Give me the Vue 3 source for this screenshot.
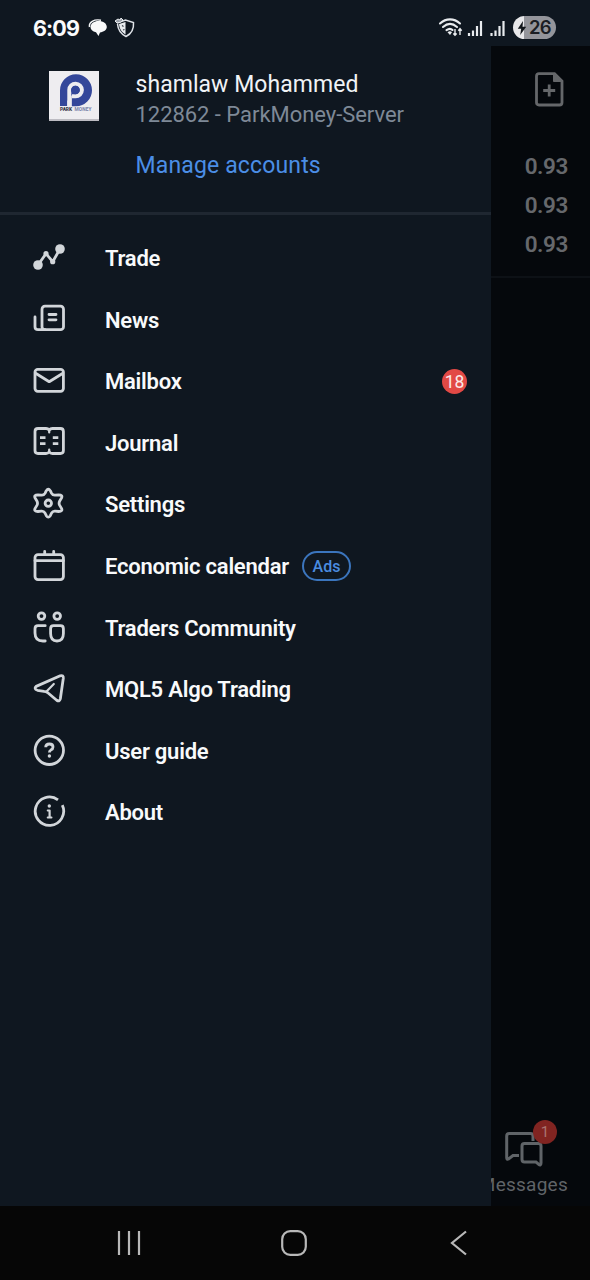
<script setup>
const items = [
  { id: 'trade', label: 'Trade' },
  { id: 'news', label: 'News' },
  { id: 'mail', label: 'Mailbox', count: 18 },
  { id: 'journal', label: 'Journal' },
  { id: 'settings', label: 'Settings' },
  { id: 'calendar', label: 'Economic calendar', tag: 'Ads' },
  { id: 'community', label: 'Traders Community' },
  { id: 'algo', label: 'MQL5 Algo Trading' },
  { id: 'guide', label: 'User guide' },
  { id: 'about', label: 'About' }
]
const values = ['0.93', '0.93', '0.93']
</script>

<template>
  <div class="screen">
    <header class="status">
      <span class="clock">6:09</span>
      <svg class="chat" width="20" height="20" viewBox="0 0 20 20">
        <path d="M1.500 9C0.500 4 6 1 13 2.200" fill="none" stroke="#f4f6f8" stroke-width="1.400" />
        <path d="M10.500 3C15.500 3 18.800 5.600 18.800 9C18.800 12 15.500 14 12 14.400L10.500 18L8 14.200C4.500 13.500 2.500 11.500 2.500 9C2.500 5.600 6 3 10.500 3Z" fill="#f8f9fa" />
      </svg>
      <svg class="shield" width="22" height="22" viewBox="0 0 22 22">
        <path d="M3 6L11.500 3L19.500 5.500C20 12 17 17 12 19.500C7 17 4 13 3.500 7" fill="none" stroke="#dfe3e8" stroke-width="1.500" />
        <path d="M5 7L11.500 5V17.500C7.500 15 5.500 12 5 7Z" fill="#e9ecef" />
        <path d="M1 4L4 2L6 3L7 1L9 3L7 5L3 6Z" fill="#9aa1aa" stroke="#e9ecef" stroke-width="1" />
        <path d="M8 8.500L9.500 9.500M9 13L10.500 12.500" stroke="#333b44" stroke-width="1.100" />
      </svg>
      <div class="spacer"></div>
      <svg class="signals" width="72" height="22" viewBox="0 0 72 22">
        <g fill="none" stroke="#e8ebee" stroke-width="2.100" stroke-linecap="round">
          <path d="M2 6.500C8 1 16 1 22 6.500" />
          <path d="M5 10C9.500 6 14.500 6 19 10" />
          <path d="M8.500 13.200C10.800 11.500 13 11.500 14.500 13" />
        </g>
        <path d="M12 18L9.500 15.200Q12 13.400 14 15.200Z" fill="#e8ebee" />
        <path d="M17 12V18M15.300 16.500L17 18.300L18.700 16.500M22 18V12M20.300 13.700L22 11.700L23.700 13.700" fill="none" stroke="#e8ebee" stroke-width="1.400" />
        <path d="M31 16V19M35 13.500V19M39 9V19M43 4V19M53.500 16V19M57.500 13.500V19M61.500 9V19M65.500 4V19" stroke="#e8ebee" stroke-width="2.200" />
      </svg>
      <div class="battery">
        <svg width="10" height="14" viewBox="0 0 10 14"><path d="M6 0L0.800 7.800H4.200L3.200 14L9.200 5.800H5.500Z" fill="#12161b" /></svg>
        <span>26</span>
      </div>
    </header>

    <main class="body">
      <aside class="drawer">
        <section class="account">
          <svg class="logo" width="50" height="50" viewBox="0 0 50 50">
            <rect width="50" height="50" fill="#eeedf0" />
            <rect y="48" width="50" height="2" fill="#bdbcc2" />
            <path d="M11 35V19.300A16 16 0 1 1 27 35.300H23V35Z" fill="#34479a" />
            <path d="M20.300 35.500V19A6.300 6.300 0 1 1 26.500 25.300H23" fill="none" stroke="#eeedf0" stroke-width="4" />
            <path d="M18.300 30V36H22.800V24Z" fill="#eeedf0" />
            <circle cx="26.300" cy="19" r="4.300" fill="#34479a" />
            <text x="11" y="40.400" textLength="12" font-size="4.800" class="logo-a">PARK</text>
            <text x="25.500" y="40.400" textLength="17" font-size="4.800" class="logo-b">MONEY</text>
          </svg>
          <div class="who">
            <div class="name">shamlaw Mohammed</div>
            <div class="server">122862 - ParkMoney-Server</div>
            <div class="manage">Manage accounts</div>
          </div>
        </section>

        <nav class="menu">
          <div v-for="item in items" :key="item.id" class="row">
            <svg class="icon" width="36" height="36" viewBox="0 0 36 36">
              <template v-if="item.id === 'trade'">
                <path d="M7 26L15 14.700L21.700 22.700L29 10" />
                <circle class="solid" cx="7" cy="26" r="4.800" />
                <circle class="solid" cx="29" cy="10" r="4.800" />
                <circle class="solid" cx="15" cy="14.700" r="2.600" />
                <circle class="solid" cx="21.700" cy="22.700" r="2.600" />
              </template>
              <template v-else-if="item.id === 'news'">
                <rect x="11" y="5.200" width="21.500" height="23.500" rx="3" />
                <path d="M4 16V25.700Q4 28.700 7 28.700H14M18 13.500H25M18 18.800H25" />
              </template>
              <template v-else-if="item.id === 'mail'">
                <rect x="4" y="7.300" width="28.400" height="22" rx="2.800" />
                <path d="M5 11.500L18.200 19.700L31.500 11.500" />
              </template>
              <template v-else-if="item.id === 'journal'">
                <path d="M18.200 6.300Q17 4.500 15 4.500H7Q4 4.500 4 7.500V26.500Q4 29.500 7 29.500H15Q17 29.500 18.200 27.700Q19.400 29.500 21.400 29.500H29.400Q32.400 29.500 32.400 26.500V7.500Q32.400 4.500 29.400 4.500H21.400Q19.400 4.500 18.200 6.300Z" />
                <path class="butt" d="M9 13.700H14.500M9 19.700H14.500M21.800 13.700H27.300M21.800 19.700H27.300" />
                <path class="thin" d="M18.200 7V8.500M18.200 25.500V27" />
              </template>
              <template v-else-if="item.id === 'settings'">
                <path d="M15.300 5.700Q17.300 2.800 19.300 5.700L20.600 8.400Q21.800 10.400 24.200 10.200L27.700 9.900Q32 10 30.500 13L28.700 16Q27.500 18.200 28.700 20.400L30.500 23.400Q32 26.400 27.700 26.500L24.200 26.200Q21.800 26 20.600 28L19.300 30.700Q17.300 33.600 15.300 30.700L14 28Q12.800 26 10.400 26.200L6.900 26.500Q2.600 26.400 4.100 23.400L5.900 20.400Q7.100 18.200 5.900 16L4.100 13Q2.600 10 6.900 9.900L10.400 10.200Q12.800 10.400 14 8.400Z" />
                <circle cx="17.300" cy="18.200" r="3.200" />
              </template>
              <template v-else-if="item.id === 'calendar'">
                <rect x="4" y="7.600" width="28.400" height="25" rx="3" />
                <path d="M4 13.700H32.400M13.700 4.500V7M22.700 4.500V7" />
              </template>
              <template v-else-if="item.id === 'community'">
                <circle cx="10.500" cy="7.100" r="3.300" />
                <circle cx="26.200" cy="7.100" r="3.300" />
                <path d="M14.200 16.700H7Q4 16.700 4 19.700V24Q4 32 12 32H14.200" />
                <path d="M22.500 16.700H29.500Q32.400 16.700 32.400 19.700V24.500Q32.400 32 26 32Q19.600 32 19.600 24.500V19.700Q19.600 16.700 22.500 16.700Z" />
              </template>
              <template v-else-if="item.id === 'algo'">
                <path d="M5.200 16.400L29.200 5.800Q32.600 4.800 32.300 8.200L29.300 29Q28.500 32 25.700 30.200L16.500 22.500Q15 21.600 13 21.400L6.500 20.300Q2.500 18.800 5.200 16.400Z" />
                <path class="thin" d="M15.500 21.500L22.800 14" />
              </template>
              <template v-else-if="item.id === 'guide'">
                <circle cx="18.300" cy="18.300" r="14.200" />
                <path d="M14.700 15.300Q14.700 12 18.400 12Q22 12 22 15Q22 17 19.800 18.100Q18.400 18.900 18.400 20.500" class="butt" />
                <circle class="solid" cx="18.400" cy="24" r="1.700" />
              </template>
              <template v-else>
                <path d="M27 6.900A14.200 14.200 0 1 0 31.300 12.200" class="butt" />
                <circle class="solid" cx="18.300" cy="13" r="1.700" />
                <path d="M16.800 17.500H18.600V24M16.800 24.500H20.400" class="thin" />
              </template>
            </svg>
            <span class="label">{{ item.label }}</span>
            <span v-if="item.tag" class="tag">{{ item.tag }}</span>
            <span v-if="item.count" class="count">{{ item.count }}</span>
          </div>
        </nav>
      </aside>

      <section class="behind">
        <svg class="doc" width="30" height="36" viewBox="0 0 30 36">
          <path d="M4 1.700H19.500L27 9.200V30.500Q27 33 24.500 33H4Q1.500 33 1.500 30.500V4.200Q1.500 1.700 4 1.700Z" />
          <path d="M18.500 2V9.500H27Z" class="fold" />
          <path d="M14.200 12.500V24.500M8.200 18.500H20.200" />
        </svg>
        <div class="values">
          <div v-for="(v, i) in values" :key="i">{{ v }}</div>
        </div>
        <div class="spacer"></div>
        <div class="tab">
          <div class="tab-icon">
            <svg width="40" height="38" viewBox="0 0 40 38">
              <path d="M14 26.500H8L3.500 30Q1.700 31 1.700 28.500V7Q1.700 4.500 4.200 4.500H25.500Q28 4.500 28 7V12" />
              <path d="M19.500 14.500H33.500Q36 14.500 36 17V34Q36 37 33.500 35.200L31 33H19.500Q17 33 17 30.500V17Q17 14.500 19.500 14.500Z" />
            </svg>
            <span class="dot">1</span>
          </div>
          <div class="tab-label"><span>Messages</span></div>
        </div>
      </section>
    </main>

    <footer class="navbar">
      <svg width="26" height="26" viewBox="0 0 26 26"><path d="M3 1V25M13 1V25M23 1V25" /></svg>
      <svg width="26" height="26" viewBox="0 0 26 26"><rect x="1.200" y="1.200" width="23.600" height="23.600" rx="8" /></svg>
      <svg width="26" height="26" viewBox="0 0 26 26"><path d="M20 1.500L6 13L20 24.500" /></svg>
    </footer>
  </div>
</template>

<style>
body { background: #060606; }
</style>

<style scoped>
.screen {
  width: 590px;
  height: 1280px;
  display: flex;
  flex-direction: column;
  overflow: hidden;
  background: #0f1720;
  font-family: Roboto, "Liberation Sans", sans-serif;
}
.spacer { flex: 1; }
.status {
  height: 46px;
  flex: none;
  display: flex;
  align-items: center;
  padding: 9px 34px 0 33px;
  box-sizing: border-box;
}
.clock {
  width: 46px;
  font: 700 21.5px/24px Inter, sans-serif;
  letter-spacing: -0.9px;
  color: #fafbfc;
  white-space: nowrap;
}
.chat { margin-left: 9px; }
.shield { margin-left: 6px; }
.signals { margin-right: 3px; }
.battery {
  width: 43px;
  height: 23px;
  border-radius: 12px;
  background: linear-gradient(90deg, #e8e8ea 0 11px, #94959b 11px);
  display: flex;
  align-items: center;
  padding-left: 4px;
  box-sizing: border-box;
  gap: 2px;
  font: 600 18.5px/23px Inter, sans-serif;
  letter-spacing: -0.900px;
  color: #1b1e24;
}
.body { flex: 1; min-height: 0; display: flex; }
.drawer { width: 491px; flex: none; background: #0f1720; }
.account {
  height: 169px;
  box-sizing: border-box;
  border-bottom: 3px solid #1f2731;
  display: flex;
  padding: 25px 0 0 49px;
}
.logo { margin-top: -0.500px; }
.who { margin-left: 36.500px; white-space: nowrap; }
.logo-a { font-weight: 900; fill: #3c3c4a; }
.logo-b { font-weight: 700; fill: #7780a8; }
.name { font-size: 23px; line-height: 28px; color: #f0f3f6; letter-spacing: 0.050px; }
.server { font-size: 22px; line-height: 31px; color: #7e8997; letter-spacing: -0.040px; }
.manage { font-size: 23px; line-height: 28px; margin-top: 22px; color: #4b8ee6; letter-spacing: 0.150px; }
.menu { padding-top: 12.500px; }
.row { height: 61.550px; display: flex; align-items: center; padding: 0 24px 0 31px; }
.icon {
  flex: none;
  margin-top: -2px;
  fill: none;
  stroke: #d2d6da;
  stroke-width: 2.800;
  stroke-linecap: round;
  stroke-linejoin: round;
}
.icon .solid { fill: #d2d6da; stroke: none; }
.icon .butt { stroke-linecap: butt; }
.icon .thin { stroke-width: 2.200; }
.label { margin-left: 38px; padding-top: 1px; font-size: 22px; font-weight: 600; letter-spacing: -0.230px; color: #f8fafb; white-space: nowrap; }
.tag {
  margin-left: 13px;
  margin-top: -1px;
  width: 49px;
  height: 30px;
  box-sizing: border-box;
  border: 2px solid #3b75bd;
  border-radius: 15px;
  text-align: center;
  font-size: 16px;
  font-weight: 500;
  line-height: 27px;
  color: #4a8ce0;
}
.count {
  margin-left: auto;
  width: 25px;
  height: 25px;
  border-radius: 50%;
  background: #e24945;
  color: #fbe9e9;
  font-size: 17.500px;
  line-height: 26px;
  text-align: center;
}
.behind {
  flex: 1;
  min-width: 0;
  background: #05080c;
  display: flex;
  flex-direction: column;
  overflow: hidden;
}
.doc { margin: 26px 0 0 44px; fill: none; stroke: #65676a; stroke-width: 2.800; flex: none; }
.doc .fold { fill: #65676a; stroke-width: 1; }
.values {
  margin-top: 38.500px;
  height: 129.500px;
  border-bottom: 2px solid #0d1116;
  padding-right: 22px;
  text-align: right;
  font-size: 22.500px;
  letter-spacing: -0.400px;
  font-weight: 600;
  line-height: 39px;
  color: #66686c;
}
.tab { height: 89px; flex: none; }
.tab-icon { position: relative; margin-left: 13.500px; height: 56px; }
.tab-icon svg { margin-top: 12px; fill: none; stroke: #606468; stroke-width: 3; }
.dot {
  position: absolute;
  left: 28.500px;
  top: 3px;
  width: 24px;
  height: 24px;
  border-radius: 50%;
  background: #812421;
  color: #aa7472;
  font-size: 15px;
  line-height: 24px;
  text-align: center;
}
.tab-label {
  display: flex;
  justify-content: flex-end;
  padding-right: 22px;
  font-size: 19px;
  letter-spacing: 0.250px;
  line-height: 24px;
  color: #606468;
}
.navbar {
  height: 74px;
  flex: none;
  background: #060606;
  display: flex;
  align-items: center;
  justify-content: space-between;
  padding: 0 118px 0 116px;
}
.navbar svg { fill: none; stroke: #b8b8b8; stroke-width: 2.200; }
</style>
